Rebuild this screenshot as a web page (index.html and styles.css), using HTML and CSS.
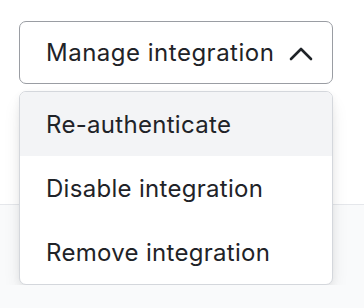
FILE: index.html
```html
<!DOCTYPE html>
<html lang="en">
<head>
  <meta charset="UTF-8" />
  <meta name="viewport" content="width=device-width, initial-scale=1.0"/>
  <title>Manage integration</title>
  <link rel="stylesheet" href="styles.css">
</head>
<body>

  <div class="dropdown">
    <button class="toggle-btn">
      <span>Manage integration</span>
      <svg class="chevron" width="24" height="14" viewBox="0 0 24 14">
        <polyline points="2,12 12,2 22,12" fill="none" stroke="#1f2328" stroke-width="2.6" stroke-linecap="round" stroke-linejoin="round"/>
      </svg>
    </button>

    <ul class="menu">
      <li class="menu-item active">Re-authenticate</li>
      <li class="menu-item">Disable integration</li>
      <li class="menu-item">Remove integration</li>
    </ul>
  </div>

</body>
</html>
```

FILE: styles.css
```css
html {
  /* white settings panel on top, grey area below it */
  background: linear-gradient(#fff 0 204px, #e5e7eb 204px 205px, #f9fafb 205px);
  min-height: 100%;
}
body {
  font-family: 'Inter', 'Noto Sans', sans-serif;
  margin: 0;
  padding: 21px 19px 0;
}
.dropdown {
  width: 314px;
}
.toggle-btn {
  display: flex;
  align-items: center;
  justify-content: space-between;
  width: 100%;
  height: 63px;
  padding: 0 19px 0 26px;
  background: #fff;
  border: 1px solid #9a9da3;
  border-radius: 7px;
  font-family: inherit;
  font-size: 24px;
  letter-spacing: 0.5px;
  white-space: nowrap;
  color: #1f2328;
  cursor: pointer;
}
.chevron {
  display: block;
  flex-shrink: 0;
  margin-top: 2px;
}
.menu {
  margin: 7px 0 0;
  padding: 0;
  list-style: none;
  background: #fff;
  border: 1px solid #d4d7dc;
  border-radius: 7px;
  overflow: hidden;
  box-shadow: 0 10px 20px -4px rgba(0,0,0,0.12), 0 2px 10px -2px rgba(0,0,0,0.08);
}
.menu-item {
  height: 64px;
  display: flex;
  align-items: center;
  padding-left: 26px;
  font-size: 24px;
  letter-spacing: 0.3px;
  white-space: nowrap;
  color: #1f2328;
}
.menu-item.active {
  background-color: #f3f4f6;
}
```
